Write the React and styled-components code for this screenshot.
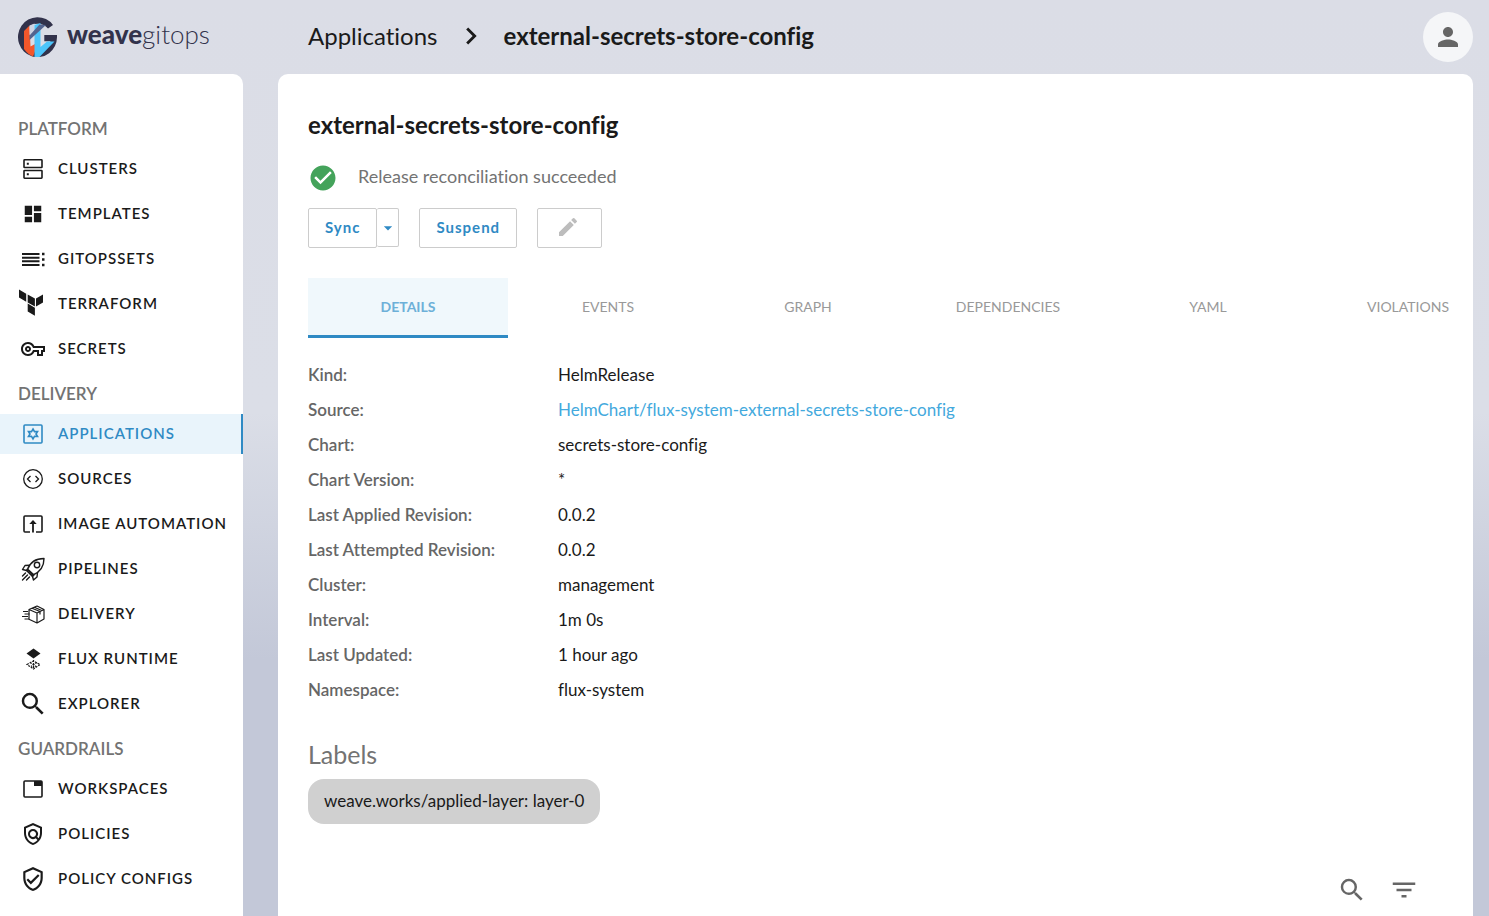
import React from "react";
import styled, { createGlobalStyle, css } from "styled-components";
import {
  MdDashboard, MdOutlineVpnKey, MdSearch, MdOutlinePolicy, MdOutlineVerifiedUser,
  MdPerson, MdFilterList, MdEdit, MdCheckCircle, MdNavigateNext, MdArrowDropDown,
} from "react-icons/md";

const Global = createGlobalStyle`
  *, *::before, *::after { box-sizing: border-box; }
  body {
    margin: 0;
    color: #1a1a1a;
    font-family: Lato, "Liberation Sans", sans-serif;
    font-size: 17px;
    line-height: 20px;
    font-variant-ligatures: none;
  }
  button { font-family: inherit; cursor: pointer; }
`;

const Page = styled.div`
  height: 100vh;
  display: grid;
  grid-template: 74px minmax(0, 1fr) / 243px minmax(0, 1fr);
  column-gap: 35px;
  padding-right: 16px;
  overflow: hidden;
  background: linear-gradient(to bottom, #dbdde6 0%, #dbdee7 45%, #c3c8d8 72%, #c3c8d8 100%);
`;

const Brand = styled.a`
  display: flex;
  align-items: center;
  gap: 10px;
  padding-left: 18px;
  color: #32324b;
  font-size: 26px;
  line-height: 28px;
  font-weight: 300;
  text-decoration: none;
  strong { font-weight: 900; }
  span { padding-bottom: 6px; }
`;

const TopBar = styled.header`
  display: flex;
  align-items: center;
  justify-content: space-between;
`;

const Crumbs = styled.nav`
  display: flex;
  align-items: center;
  gap: 16px;
  padding: 0 0 2px 30px;
  font-size: 24px;
  line-height: 28px;
  a { color: inherit; text-decoration: none; }
`;

const Avatar = styled.button`
  display: grid;
  place-items: center;
  width: 50px;
  height: 50px;
  padding: 0;
  border: 0;
  border-radius: 50%;
  background: #f5f6f8;
  color: #666;
`;

const Sidebar = styled.nav`
  padding-top: 45px;
  overflow: hidden;
  border-radius: 0 10px 0 0;
  background: #fff;
`;

const GroupTitle = styled.h2`
  margin: 0;
  padding: 0 18px;
  height: 20px;
  color: #737373;
  font-size: 17px;
  line-height: 20px;
  font-weight: 600;
`;

const NavList = styled.ul`
  display: grid;
  gap: 5px;
  margin: 0;
  padding: 10px 0 15px;
  list-style: none;
`;

const NavLink = styled.a`
  display: flex;
  align-items: center;
  height: 40px;
  padding-left: 18px;
  border-right: 2px solid transparent;
  color: #1a1a1a;
  font-size: 15px;
  font-weight: 600;
  letter-spacing: 1px;
  text-decoration: none;
  ${(p) => p.$active && css`
    border-right-color: #2f8ac4;
    background: #e9f4fb;
    color: #2f8ac4;
  `}
`;

const NavIcon = styled.span`
  display: grid;
  place-items: center;
  flex: none;
  width: 30px;
  margin-right: 10px;
`;

const NavText = styled.span`
  padding-bottom: 2px;
`;

const Panel = styled.main`
  padding: 36px 0 0 30px;
  overflow: hidden;
  border-radius: 10px 10px 0 0;
  background: #fff;
`;

const Title = styled.h1`
  margin: 0;
  font-size: 24px;
  line-height: 30px;
  font-weight: 700;
`;

const Status = styled.div`
  display: flex;
  align-items: center;
  gap: 20px;
  height: 30px;
  margin: 23px 0 15px;
  color: #737373;
  font-size: 18px;
  span { padding-bottom: 4px; }
`;

const Actions = styled.div`
  display: flex;
  gap: 20px;
  height: 40px;
`;

const Split = styled.div`
  display: flex;
`;

const Button = styled.button`
  display: grid;
  place-items: center;
  height: 40px;
  padding: 0 16px 2px;
  border: 1px solid #ccc;
  border-radius: 2px;
  background: #fff;
  color: #2f8ac4;
  font-size: 15px;
  font-weight: 700;
  letter-spacing: 1px;
`;

const EditButton = styled(Button)`
  width: 65px;
  color: #bdbdbd;
  padding-right: 20px;
`;

const MenuButton = styled(Button)`
  width: 22px;
  height: 39px;
  padding: 0;
  border-left: 0;
`;

const Tabs = styled.div`
  display: flex;
  margin-top: 30px;
`;

const Tab = styled.button`
  flex: none;
  width: 200px;
  height: 60px;
  padding: 0;
  border: 0;
  border-bottom: 3px solid ${(p) => (p.$active ? "#2f8ac4" : "transparent")};
  background: ${(p) => (p.$active ? "#f0f8fc" : "none")};
  color: ${(p) => (p.$active ? "#6db0d8" : "#999")};
  font-size: 14px;
  font-weight: ${(p) => (p.$active ? 700 : 400)};
`;

const Facts = styled.table`
  margin-top: 19px;
  border-collapse: collapse;
  th, td { height: 35px; padding: 0; text-align: left; }
  th { width: 250px; color: #666; font-weight: 600; }
  a { color: #43a9dd; text-decoration: none; }
`;

const LabelsTitle = styled.h2`
  margin: 33px 0 11px;
  color: #737373;
  font-size: 25px;
  line-height: 28px;
  font-weight: 400;
`;

const Chip = styled.span`
  display: inline-block;
  padding: 12px 16px 13px;
  border-radius: 16px;
  background: #d0d0d0;
`;

const TableTools = styled.div`
  display: flex;
  justify-content: flex-end;
  gap: 22px;
  margin-top: 51px;
  padding-right: 54px;
`;

const IconButton = styled.button`
  display: grid;
  padding: 0;
  border: 0;
  background: none;
  color: #666;
`;

const Svg = ({ size = 26, children }) => (
  <svg width={size} height={size} viewBox="0 0 26 26" fill="none" stroke="currentColor" strokeWidth="1.6" overflow="visible" aria-hidden="true">
    {children}
  </svg>
);

const Logo = () => (
  <svg width="39" height="40" viewBox="0 0 39 40" aria-hidden="true">
    <path d="M35 8A19.500 20 0 1 0 39 20V18H26.300v6.200H32.500A13.500 13.500 0 1 1 30 11.500Z" fill="#32324b" />
    <path d="M11.500 8.500 6 14v18q4 5.500 9 7.500l2-5V27l-4.500 2.500Z" fill="#f4572b" />
    <path d="M11.500 8.500 16.500 6.500v6l-5 5.500Z" fill="#cdd3e2" />
    <path d="M16.500 8l6-2V30l6.500-5.500h7.500L21.500 40h-5Z" fill="#4cc5fb" />
    <path d="M11.500 18.500 21.500 7.500 28 8 11.500 23Z" fill="#53648f" />
  </svg>
);

const Clusters = () => (
  <Svg>
    <rect x="4" y="3.800" width="18" height="7.700" rx=".6" />
    <rect x="4" y="14.500" width="18" height="7.700" rx=".6" />
    <path d="M6.800 7.700h2M6.800 18.300h2" strokeWidth="2" />
  </Svg>
);

const ListDots = () => (
  <Svg>
    <path d="M2 8h17.500M2 11.700h17.500M2 15.300h17.500M2 19h17.500" strokeWidth="2" />
    <path d="M22 8h2.500M22 13.500h2.500M22 19h2.500" strokeWidth="2.400" />
  </Svg>
);

const Templates = () => <MdDashboard size={22} />;
const Key = () => <MdOutlineVpnKey size={24} />;
const Search = () => <MdSearch size={30} />;
const Policies = () => <MdOutlinePolicy size={24} />;

const Terraform = () => (
  <Svg>
    <g fill="currentColor" stroke="none">
      <path d="M-1-1.500v8l7.200 4.200v-8ZM7.700 3.400v8l7.200 4.200v-8ZM16 7.600v8l7-4.100v-8ZM7.700 12.500v8l7.200 4.200v-8Z" />
    </g>
  </Svg>
);

const Applications = () => (
  <Svg>
    <rect x="4" y="4" width="18" height="18" rx="1" />
    <path d="M13 8l1.500 2.600 3-.1L16 13l1.500 2.500-3-.1L13 18l-1.500-2.600-3 .1L10 13 8.500 10.500l3 .1Z" />
  </Svg>
);

const Sources = () => (
  <Svg>
    <circle cx="13" cy="13" r="9.300" strokeWidth="1.300" />
    <path d="M10.500 10 7.500 13l3 3M15.500 10l3 3-3 3" strokeWidth="1.300" />
  </Svg>
);

const ImageAutomation = () => (
  <Svg>
    <path d="M10 21H5q-1 0-1-1V6q0-1 1-1h16q1 0 1 1v14q0 1-1 1h-5" />
    <path d="M13 21.500V11" strokeWidth="1.800" />
    <path d="M13 9l3.700 4H9.300Z" fill="currentColor" stroke="none" />
  </Svg>
);

const Rocket = () => (
  <Svg>
    <g strokeWidth="1.400" strokeLinejoin="round" strokeLinecap="round">
      <path d="M7.500 13.500C10 6.500 15 2.500 24 2.500c0 8.500-4 13.500-11 16.500ZM6.500 14.500l6 6 1.500-1.500-6.500-6Z" />
      <circle cx="17" cy="9" r="2.700" />
      <path d="M9.500 9.300 5 9.500l-2.500 4 4 1M17.500 16.500l-.5 4.500-3.500 3-1-3.500M5.500 17 2.500 20M7.500 19l-5 5M9.500 21l-3 3" />
    </g>
  </Svg>
);

const Parcel = () => (
  <Svg>
    <g strokeWidth="1.200" strokeLinejoin="round">
      <path d="M9 8.500 17 5l7 3.500v9.500l-7 4-8-3.800ZM9 8.500l8 3.500 7-3.500M17 12v10M12 7.200l8 3.300v3M14.300 6.200l7.500 3.300" />
      <path d="M3 10.500h5M4.500 13h5M2 15.500h6M4.500 18H9" strokeWidth="1" />
    </g>
  </Svg>
);

const Flux = () => (
  <Svg>
    <path d="M13.500 2.500 20.500 7.500l-7 5-7-5Z" fill="currentColor" stroke="none" />
    <path d="m7 18.500 6.500-3.500 6.500 3.500-6.500 4.500ZM10 16.500l6 4M17 16.500l-6 4M13.500 14v9" strokeWidth="1.200" strokeDasharray="2 1" />
  </Svg>
);

const Workspaces = () => (
  <Svg>
    <rect x="4" y="5" width="18" height="16" rx="1" />
    <path d="M14 5h8v5h-8Z" fill="currentColor" stroke="none" />
  </Svg>
);

const groups = [
  { title: "PLATFORM", items: [
    ["CLUSTERS", Clusters], ["TEMPLATES", Templates], ["GITOPSSETS", ListDots],
    ["TERRAFORM", Terraform], ["SECRETS", Key],
  ] },
  { title: "DELIVERY", items: [
    ["APPLICATIONS", Applications], ["SOURCES", Sources], ["IMAGE AUTOMATION", ImageAutomation],
    ["PIPELINES", Rocket], ["DELIVERY", Parcel], ["FLUX RUNTIME", Flux], ["EXPLORER", Search],
  ] },
  { title: "GUARDRAILS", items: [
    ["WORKSPACES", Workspaces], ["POLICIES", Policies], ["POLICY CONFIGS", MdOutlineVerifiedUser],
  ] },
];

const facts = [
  ["Kind", "HelmRelease"],
  ["Source", <a href="#source">HelmChart/flux-system-external-secrets-store-config</a>],
  ["Chart", "secrets-store-config"],
  ["Chart Version", "*"],
  ["Last Applied Revision", "0.0.2"],
  ["Last Attempted Revision", "0.0.2"],
  ["Cluster", "management"],
  ["Interval", "1m 0s"],
  ["Last Updated", "1 hour ago"],
  ["Namespace", "flux-system"],
];

const tabs = ["DETAILS", "EVENTS", "GRAPH", "DEPENDENCIES", "YAML", "VIOLATIONS"];

export default function App() {
  return (
    <Page>
      <Global />
      <Brand href="#home">
        <Logo />
        <span><strong>weave</strong>gitops</span>
      </Brand>
      <TopBar>
        <Crumbs aria-label="Breadcrumb">
          <a href="#applications">Applications</a>
          <MdNavigateNext size={34} />
          <strong>external-secrets-store-config</strong>
        </Crumbs>
        <Avatar aria-label="Account"><MdPerson size={30} /></Avatar>
      </TopBar>
      <Sidebar aria-label="Main">
        {groups.map((group) => (
          <React.Fragment key={group.title}>
            <GroupTitle>{group.title}</GroupTitle>
            <NavList>
              {group.items.map(([name, Icon]) => (
                <li key={name}>
                  <NavLink href={`#${name.toLowerCase()}`} $active={name === "APPLICATIONS"}>
                    <NavIcon><Icon size={26} /></NavIcon>
                    <NavText>{name}</NavText>
                  </NavLink>
                </li>
              ))}
            </NavList>
          </React.Fragment>
        ))}
      </Sidebar>
      <Panel>
        <Title>external-secrets-store-config</Title>
        <Status>
          <MdCheckCircle size={30} color="#44a35b" />
          <span>Release reconciliation succeeded</span>
        </Status>
        <Actions>
          <Split>
            <Button>Sync</Button>
            <MenuButton aria-label="Sync options"><MdArrowDropDown size={20} /></MenuButton>
          </Split>
          <Button>Suspend</Button>
          <EditButton aria-label="Edit" disabled><MdEdit size={24} /></EditButton>
        </Actions>
        <Tabs role="tablist">
          {tabs.map((tab, i) => (
            <Tab key={tab} role="tab" aria-selected={i === 0} $active={i === 0}>{tab}</Tab>
          ))}
        </Tabs>
        <Facts>
          <tbody>
            {facts.map(([name, value]) => (
              <tr key={name}>
                <th scope="row">{name}:</th>
                <td>{value}</td>
              </tr>
            ))}
          </tbody>
        </Facts>
        <LabelsTitle>Labels</LabelsTitle>
        <Chip>weave.works/applied-layer: layer-0</Chip>
        <TableTools>
          <IconButton aria-label="Search"><MdSearch size={30} /></IconButton>
          <IconButton aria-label="Filter"><MdFilterList size={30} /></IconButton>
        </TableTools>
      </Panel>
    </Page>
  );
}
